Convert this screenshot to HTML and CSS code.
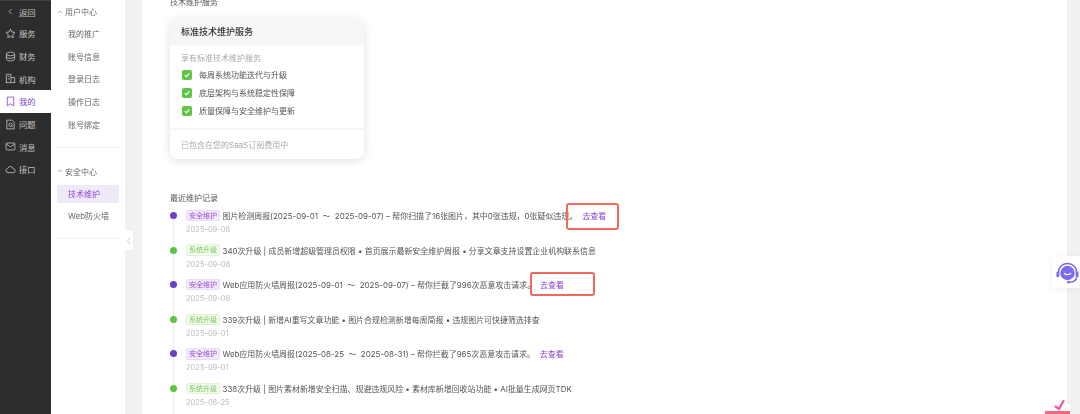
FILE: index.html
```html
<!DOCTYPE html>
<html lang="zh-CN">
<head>
  <meta charset="UTF-8">
  <title>技术维护</title>
  <link rel="stylesheet" href="styles.css">
</head>
<body>
  <div class="shell">
    <nav class="rail">
      <a class="rail-item"><svg class="rail-icon" viewBox="0 0 12 12"><path d="M7 3.500 4.500 6 7 8.500"/></svg>返回</a>
      <a class="rail-item"><svg class="rail-icon" viewBox="0 0 12 12"><path d="M6 1.200l1.500 3.100 3.400.5-2.500 2.400.6 3.400L6 9l-3 1.600.6-3.400L1.100 4.800l3.400-.5z"/></svg>服务</a>
      <a class="rail-item"><svg class="rail-icon" viewBox="0 0 12 12"><ellipse cx="6" cy="3.200" rx="4.500" ry="2"/><path d="M1.500 3.200v5.600c0 1.100 2 2 4.500 2s4.500-.9 4.500-2V3.200M1.500 6c0 1.100 2 2 4.500 2s4.500-.9 4.500-2"/></svg>财务</a>
      <a class="rail-item"><svg class="rail-icon" viewBox="0 0 12 12"><path d="M1.500 10.500v-9h5v9M6.500 5h4v5.500M.8 10.500h10.400M3 4h2M3 6.500h2"/></svg>机构</a>
      <a class="rail-item rail-item-active"><svg class="rail-icon" viewBox="0 0 12 12"><path d="M2.500 1.200h7v9.600L6 8.500l-3.500 2.300z"/></svg>我的</a>
      <a class="rail-item"><svg class="rail-icon" viewBox="0 0 12 12"><path d="M2 1.200h5.500L10 3.700v7.100H2z"/><circle cx="6" cy="6.300" r="1.800"/><path d="M7.300 7.600 8.300 8.600"/></svg>问题</a>
      <a class="rail-item"><svg class="rail-icon" viewBox="0 0 12 12"><rect x="1.200" y="2.200" width="9.600" height="7.600" rx="1"/><path d="M1.500 3.200 6 6.500l4.500-3.300"/></svg>消息</a>
      <a class="rail-item"><svg class="rail-icon" viewBox="0 0 12 12"><path d="M3.300 9.500a2.400 2.400 0 0 1-.4-4.700 3.200 3.200 0 0 1 6.100.5 2.100 2.100 0 0 1 0 4.200z"/></svg>接口</a>
    </nav>

    <aside class="subnav">
      <div class="subnav-group">
        <div class="subnav-title"><svg class="caret" viewBox="0 0 8 8"><path d="M1 5.500 4 2.500l3 3"/></svg>用户中心</div>
        <a class="subnav-item">我的推广</a>
        <a class="subnav-item">账号信息</a>
        <a class="subnav-item">登录日志</a>
        <a class="subnav-item">操作日志</a>
        <a class="subnav-item">账号绑定</a>
      </div>
      <div class="subnav-group">
        <div class="subnav-title"><svg class="caret" viewBox="0 0 8 8"><path d="M1 5.500 4 2.500l3 3"/></svg>安全中心</div>
        <a class="subnav-item subnav-item-active">技术维护</a>
        <a class="subnav-item">Web防火墙</a>
      </div>
      <button class="collapse-tab"><svg viewBox="0 0 8 12"><path d="M5.500 2.500 2.500 6l3 3.500"/></svg></button>
    </aside>

    <main class="panel">
      <h4 class="section-title section-title-clipped">技术维护服务</h4>
      <section class="plan-card">
        <h3 class="plan-head">标准技术维护服务</h3>
        <div class="plan-body">
          <p class="plan-lead">享有标准技术维护服务</p>
          <div class="plan-row"><span class="check"><svg viewBox="0 0 10 10"><path d="M2.800 5.200 4.400 6.800 7.300 3.400"/></svg></span>每周系统功能迭代与升级</div>
          <div class="plan-row"><span class="check"><svg viewBox="0 0 10 10"><path d="M2.800 5.200 4.400 6.800 7.300 3.400"/></svg></span>底层架构与系统稳定性保障</div>
          <div class="plan-row"><span class="check"><svg viewBox="0 0 10 10"><path d="M2.800 5.200 4.400 6.800 7.300 3.400"/></svg></span>质量保障与安全维护与更新</div>
        </div>
        <div class="plan-foot">已包含在您的SaaS订阅费用中</div>
      </section>

      <h4 class="section-title">最近维护记录</h4>
      <ul class="timeline">
        <li class="log log-security">
          <div class="log-line"><span class="tag">安全维护</span>图片检测周报(2025-09-01  ～  2025-09-07) – 帮你扫描了16张图片，其中0张违规，0张疑似违规。<a class="log-link">去查看<i class="mark mark-first"></i></a></div>
          <div class="log-date">2025-09-08</div>
        </li>
        <li class="log log-upgrade">
          <div class="log-line"><span class="tag">系统升级</span>340次升级 | 成员新增超级管理员权限 • 首页展示最新安全维护周报 • 分享文章支持设置企业机构联系信息</div>
          <div class="log-date">2025-09-08</div>
        </li>
        <li class="log log-security">
          <div class="log-line"><span class="tag">安全维护</span>Web应用防火墙周报(2025-09-01  ～  2025-09-07) – 帮你拦截了996次恶意攻击请求。<a class="log-link">去查看<i class="mark mark-second"></i></a></div>
          <div class="log-date">2025-09-08</div>
        </li>
        <li class="log log-upgrade">
          <div class="log-line"><span class="tag">系统升级</span>339次升级 | 新增AI重写文章功能 • 图片合规检测新增每周简报 • 违规图片可快捷筛选排查</div>
          <div class="log-date">2025-09-01</div>
        </li>
        <li class="log log-security">
          <div class="log-line"><span class="tag">安全维护</span>Web应用防火墙周报(2025-08-25  ～  2025-08-31) – 帮你拦截了965次恶意攻击请求。<a class="log-link">去查看</a></div>
          <div class="log-date">2025-09-01</div>
        </li>
        <li class="log log-upgrade">
          <div class="log-line"><span class="tag">系统升级</span>338次升级 | 图片素材新增安全扫描、规避违规风险 • 素材库新增回收站功能 • AI批量生成网页TDK</div>
          <div class="log-date">2025-08-25</div>
        </li>
      </ul>
    </main>

    <div class="gutter"></div>

    <button class="float-help">
      <svg viewBox="0 0 26 26">
        <path class="help-band" d="M3.500 14v-2a9.500 9.500 0 0 1 19 0v2"/>
        <circle class="help-face" cx="13" cy="12.500" r="7.500"/>
        <path class="help-smile" d="M9.500 12.500c.8 2.300 6.200 2.300 7 0"/>
        <rect class="help-ear" x="1.500" y="11" width="3" height="6" rx="1.500"/>
        <rect class="help-ear" x="21.500" y="11" width="3" height="6" rx="1.500"/>
        <path class="help-band" d="M22.500 17c0 3-3.500 5-7.500 5"/>
        <circle class="help-face" cx="14" cy="22" r="1.500"/>
      </svg>
    </button>
    <button class="float-promo">
      <svg viewBox="0 0 28 28">
        <path class="promo-tick" d="M12 8l4 3 5-9"/>
        <rect class="promo-box" x="2" y="13" width="25" height="15"/>
      </svg>
    </button>
  </div>
</body>
</html>
```

FILE: styles.css
```css
* {
  box-sizing: border-box;
}
html, body {
  margin: 0;
  height: 100%;
  overflow: hidden;
}
body {
  font-family: Inter, "Noto Sans CJK SC", sans-serif;
  font-size: 8px;
  color: #555;
  background: #f1f1f1;
}
/* the shot is soft, so text is softened a touch too */
.shell {
  position: relative;
  display: flex;
  height: 414px;
  overflow: hidden;
  filter: blur(.35px);
}

/* dark rail */
.rail {
  width: 51px;
  flex: none;
  background: #2d2d2d;
  border-top: 1px solid #444;
}
.rail-item {
  display: flex;
  align-items: center;
  gap: 3px;
  height: 22.700px;
  padding-left: 5px;
  font-size: 8.300px;
  color: #c4c4c4;
}
.rail-item:first-child {
  height: 21px;
}
.rail-item-active {
  background: #fff;
  color: #8a3fd6;
}
.rail-icon {
  width: 11px;
  height: 11px;
  fill: none;
  stroke: currentColor;
  stroke-width: .9;
}

/* second level menu */
.subnav {
  position: relative;
  width: 74px;
  flex: none;
  padding: 4px 6px 0;
  background: #fff;
}
.subnav-group {
  border-bottom: 1px solid #efefef;
  padding-bottom: 13px;
  margin-bottom: 16px;
}
.subnav-title {
  display: flex;
  align-items: center;
  height: 15px;
  margin-bottom: 6px;
  color: #666;
}
.caret {
  width: 6px;
  height: 6px;
  margin-right: 2px;
  fill: none;
  stroke: #888;
  stroke-width: .8;
}
.subnav-item {
  display: block;
  height: 18px;
  margin-bottom: 4.700px;
  padding-left: 11px;
  line-height: 18px;
  border-radius: 2px;
  color: #666;
}
.subnav-item:last-child {
  margin-bottom: 0;
}
.subnav-item-active {
  background: #f0e9f9;
  color: #8a3fd6;
}
.collapse-tab {
  position: absolute;
  left: 74px;
  top: 231px;
  width: 8px;
  height: 19px;
  padding: 0;
  border: 0;
  background: #fff;
}
.collapse-tab svg {
  display: block;
  width: 8px;
  height: 12px;
  fill: none;
  stroke: #bbb;
  stroke-width: .7;
}

/* main white panel */
.panel {
  width: 925px;
  flex: none;
  margin-left: 17px;
  padding-left: 28px;
  background: #fff;
}
.section-title {
  margin: 0;
  height: 12px;
  font-size: 8px;
  font-weight: 400;
  line-height: 12px;
  color: #555;
}
.section-title-clipped {
  margin-top: -4px;
}
.plan-card {
  width: 194px;
  height: 141px;
  margin: 10px 0 33px;
  border-radius: 8px;
  overflow: hidden;
  background: #fff;
  box-shadow: 0 2px 10px rgba(0, 0, 0, .12);
}
.plan-head {
  margin: 0;
  height: 27px;
  padding-left: 11px;
  font-size: 9px;
  font-weight: 500;
  line-height: 27px;
  color: #333;
  background: #f6f6f6;
}
.plan-body {
  height: 85px;
  padding: 7px 11px 0;
  border-bottom: 2px solid #f5f5f5;
}
.plan-lead {
  margin: 0 0 1.500px;
  height: 12px;
  line-height: 12px;
  color: #aaa;
}
.plan-row {
  display: flex;
  align-items: center;
  gap: 7px;
  height: 18px;
  padding-left: 1px;
  color: #555;
}
.check {
  width: 10px;
  height: 10px;
  border-radius: 2px;
  background: #63c545;
}
.check svg {
  display: block;
  fill: none;
  stroke: #fff;
  stroke-width: 1.200;
}
.plan-foot {
  padding: 9px 11px 0;
  line-height: 12px;
  color: #aaa;
}

/* timeline */
.timeline {
  position: relative;
  margin: 0;
  padding: 5px 0 0;
  list-style: none;
}
.timeline::before {
  content: "";
  position: absolute;
  left: 2.500px;
  top: 11px;
  bottom: -40px;
  width: 1.500px;
  background: #ebe9f6;
}
.log {
  position: relative;
  height: 34.600px;
  padding-left: 16px;
}
.log::before {
  content: "";
  position: absolute;
  left: 0;
  top: 3px;
  width: 7px;
  height: 7px;
  border-radius: 50%;
}
.log-security::before {
  background: #6a3fc9;
}
.log-upgrade::before {
  background: #5cc53f;
}
.log-line {
  display: flex;
  align-items: center;
  height: 13px;
  font-size: 7.950px;
  white-space: pre;
  color: #555;
}
.tag {
  width: 34px;
  height: 11.500px;
  margin-right: 2.500px;
  border: 1px solid;
  border-radius: 2px;
  font-size: 7px;
  line-height: 9.500px;
  text-align: center;
}
.log-security .tag {
  color: #9b4fd9;
  background: #f3ebfb;
  border-color: #e8dcf7;
}
.log-upgrade .tag {
  color: #77c95a;
  background: #f4fbf0;
  border-color: #e0f3d6;
}
.log-link {
  position: relative;
  margin-left: 5px;
  font-size: 8px;
  color: #8a3fd6;
}
.mark {
  position: absolute;
  border: 2px solid #f0695c;
  border-radius: 3px;
}
.mark-first {
  left: -16px;
  top: -7px;
  width: 53px;
  height: 27px;
}
.mark-second {
  left: -10px;
  top: -7px;
  width: 65px;
  height: 24px;
}
.log-date {
  margin-top: 2px;
  height: 12px;
  font-size: 7.500px;
  line-height: 12px;
  color: #bbb;
}
.gutter {
  flex: 1;
  background: #f1f1f1;
}

/* floating buttons on the right */
.float-help {
  position: absolute;
  right: 0;
  top: 256px;
  width: 28px;
  height: 32px;
  padding: 2px 0 0 3px;
  border: 0;
  border-radius: 4px 0 0 4px;
  background: #fff;
  box-shadow: 0 1px 6px rgba(0, 0, 0, .06);
}
.float-help svg {
  display: block;
  width: 25px;
  height: 25px;
}
.help-band {
  fill: none;
  stroke: #6f62e8;
  stroke-width: 1.500;
}
.help-face, .help-ear {
  fill: #7a6df0;
}
.help-smile {
  fill: none;
  stroke: #fff;
  stroke-width: 1.300;
}
.float-promo {
  position: absolute;
  left: 1043px;
  top: 398px;
  width: 28px;
  height: 28px;
  padding: 0;
  border: 0;
  border-radius: 50%;
  overflow: hidden;
  background: #fff;
}
.float-promo svg {
  display: block;
  width: 28px;
  height: 28px;
}
.promo-tick {
  fill: none;
  stroke: #ec5aa0;
  stroke-width: 2.200;
}
.promo-box {
  fill: #f4677f;
}
```
